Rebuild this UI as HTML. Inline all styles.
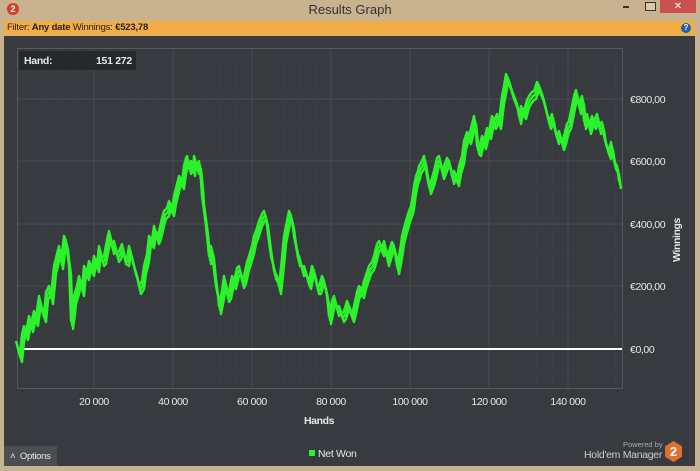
<!DOCTYPE html>
<html><head><style>
body{margin:0;width:700px;height:471px;background:#c9b28f;font-family:"Liberation Sans",sans-serif;overflow:hidden;position:relative}
.t{position:absolute;left:0;top:0;width:700px;height:20px;text-align:center;font-size:13px;line-height:19px;color:#333}
.logo{position:absolute;left:7px;top:3px;width:12px;height:12px;border-radius:6px;background:#d2402a;color:#fff;font-size:9px;font-weight:bold;text-align:center;line-height:12px}
.close{position:absolute;left:660px;top:0;width:36px;height:13px;background:#c9504c;color:#fff;font-size:10px;text-align:center;line-height:13px}
.fb{position:absolute;left:4px;top:21px;width:691px;height:14px;background:#f2ae45;font-size:9.5px;line-height:14px;color:#222;padding-left:3px;box-sizing:border-box;letter-spacing:-0.2px}
.help{position:absolute;right:4px;top:2px;width:10px;height:10px;border-radius:5px;background:#1f63a8;color:#fff;font-size:8px;line-height:10px;text-align:center;font-weight:bold}
.p{position:absolute;left:4px;top:36px;width:691px;height:430px;background:#373a3e}
.lab{position:absolute;color:#e8e8e8;font-size:10.5px;letter-spacing:-0.3px}
</style></head><body>
<div class="t">Results Graph</div>
<div class="logo">2</div>
<div style="position:absolute;left:623px;top:6px;width:6px;height:2px;background:#333"></div>
<div style="position:absolute;left:645px;top:2px;width:9px;height:7px;border:1px solid #333;background:#d9c7a8"></div>
<div class="close">✕</div>
<div class="fb">Filter: <b>Any date</b> Winnings: <b>€523,78</b><div class="help">?</div></div>
<div class="p"></div>
<svg style="position:absolute;left:0;top:0" width="700" height="471">
<defs>
<pattern id="mg" x="15" y="-0.5" width="15.8" height="31.25" patternUnits="userSpaceOnUse">
<path d="M0 0V31.25M0 0H15.8" stroke="#3f4246" stroke-width="1" fill="none"/></pattern>
</defs>
<rect x="17" y="48" width="605" height="340" fill="url(#mg)"/>
<g stroke="#4a4d52" stroke-width="1">
<line x1="94" y1="48" x2="94" y2="388"/><line x1="173" y1="48" x2="173" y2="388"/><line x1="252" y1="48" x2="252" y2="388"/><line x1="331" y1="48" x2="331" y2="388"/><line x1="410" y1="48" x2="410" y2="388"/><line x1="489" y1="48" x2="489" y2="388"/><line x1="568" y1="48" x2="568" y2="388"/>
<line x1="17" y1="99" x2="622" y2="99"/><line x1="17" y1="161" x2="622" y2="161"/><line x1="17" y1="224" x2="622" y2="224"/><line x1="17" y1="286" x2="622" y2="286"/>
</g>
<rect x="17.5" y="48.5" width="605" height="340" fill="none" stroke="#55585d"/>
<line x1="17" y1="349" x2="622" y2="349" stroke="#fff" stroke-width="2"/>
<g fill="none" stroke="#2cf22c" stroke-linejoin="round">
<polyline id="pl" stroke-width="2.4" points="17,345 19,352 21,358 23,338 25,330 27,336 30,320 32,328 35,315 37,322 40,300 42,310 45,318 47,296 50,290 52,300 55,270 57,262 60,250 62,265 65,240 67,245 68,255 70,270 72,325 74,310 75,300 78,290 80,280 83,292 85,270 88,276 90,265 93,272 95,260 98,268 100,250 103,262 105,260 108,244 110,235 113,250 115,245 118,258 120,255 123,248 125,260 128,262 130,250 133,262 135,270 138,280 140,290 143,285 145,270 148,258 150,240 153,244 155,230 158,240 160,235 163,222 165,215 168,212 170,205 173,212 175,200 178,188 180,180 183,185 185,170 187,162 188,160 190,170 192,165 194,172 195,160 198,170 200,165 202,185 203,200 205,215 207,230 209,250 210,260 212,250 213,255 215,275 217,290 219,300 220,310 223,295 225,280 228,298 230,295 233,280 235,285 238,272 240,270 243,284 245,280 248,266 250,260 253,250 255,240 258,232 260,225 263,218 265,215 267,222 268,230 270,246 272,260 274,268 275,275 278,280 280,290 283,262 285,240 288,225 290,215 292,220 293,225 295,240 297,250 299,262 300,260 303,272 305,270 308,280 310,285 313,270 315,275 318,290 320,290 323,280 325,285 328,300 330,320 333,305 335,300 338,312 340,310 343,318 345,315 348,305 350,310 353,318 355,310 358,296 360,290 363,294 365,285 368,276 370,270 373,266 375,260 378,248 380,245 383,252 385,245 388,262 390,255 393,246 395,250 398,270 400,260 402,248 403,240 405,232 407,225 409,218 410,215 412,210 413,205 415,190 417,180 419,175 420,170 423,165 425,160 428,180 430,190 433,182 435,175 438,162 440,160 443,175 445,170 448,162 450,165 453,180 455,175 458,182 460,170 463,160 465,145 468,136 470,140 473,128 475,120 477,138 478,150 480,152 483,140 485,145 488,132 490,135 493,120 495,125 498,118 500,125 503,100 505,90 507,78 510,85 513,95 515,100 518,108 520,120 522,110 525,115 528,104 530,100 533,96 535,95 538,86 540,90 543,98 545,105 548,118 550,125 553,118 555,130 558,140 560,135 563,146 565,140 568,128 570,125 573,110 575,100 577,94 580,110 583,100 585,125 588,118 590,130 593,120 595,125 598,118 600,130 603,126 605,140 608,150 610,155 612,146 615,165 618,170 620,185"/>
<use href="#pl" transform="translate(1,4)" stroke-width="1.6"/>
<use href="#pl" transform="translate(-1,-4)" stroke-width="1.6"/>
</g>
<g fill="#e8e8e8" font-size="10.5" font-family="Liberation Sans" text-anchor="middle" letter-spacing="-0.4">
<text x="94" y="405">20 000</text><text x="173" y="405">40 000</text><text x="252" y="405">60 000</text><text x="331" y="405">80 000</text><text x="410" y="405">100 000</text><text x="489" y="405">120 000</text><text x="568" y="405">140 000</text>
<text x="319" y="424" font-weight="bold">Hands</text>
</g>
<g fill="#e8e8e8" font-size="10.5" font-family="Liberation Sans" letter-spacing="-0.4">
<text x="630" y="103">€800,00</text><text x="630" y="165">€600,00</text><text x="630" y="228">€400,00</text><text x="630" y="290">€200,00</text><text x="630" y="353">€0,00</text>
<text transform="translate(680,240) rotate(-90)" font-weight="bold" text-anchor="middle">Winnings</text>
</g>
</svg>
<div style="position:absolute;left:19px;top:51px;width:117px;height:19px;background:#26282b"></div>
<div class="lab" style="left:24px;top:55px;font-weight:bold">Hand:</div>
<div class="lab" style="left:96px;top:55px;font-weight:bold">151 272</div>
<div style="position:absolute;left:4px;top:446px;width:53px;height:20px;background:#4a4d52"></div>
<div class="lab" style="left:10px;top:451px;font-size:9.5px">˄ &nbsp;Options</div>
<div style="position:absolute;left:309px;top:450px;width:6px;height:6px;background:#2cf22c"></div>
<div class="lab" style="left:318px;top:448px">Net Won</div>
<div class="lab" style="left:623px;top:440px;font-size:7.5px;color:#aaa;letter-spacing:0">Powered by</div>
<div class="lab" style="left:584px;top:449px;font-size:10.5px;color:#ccc">Hold'em Manager</div>
<div style="position:absolute;left:665px;top:441px;width:17px;height:21px;background:#e0702e;clip-path:polygon(50% 0,100% 25%,100% 75%,50% 100%,0 75%,0 25%);color:#fff;font-weight:bold;font-size:13px;text-align:center;line-height:21px">2</div>
</body></html>
